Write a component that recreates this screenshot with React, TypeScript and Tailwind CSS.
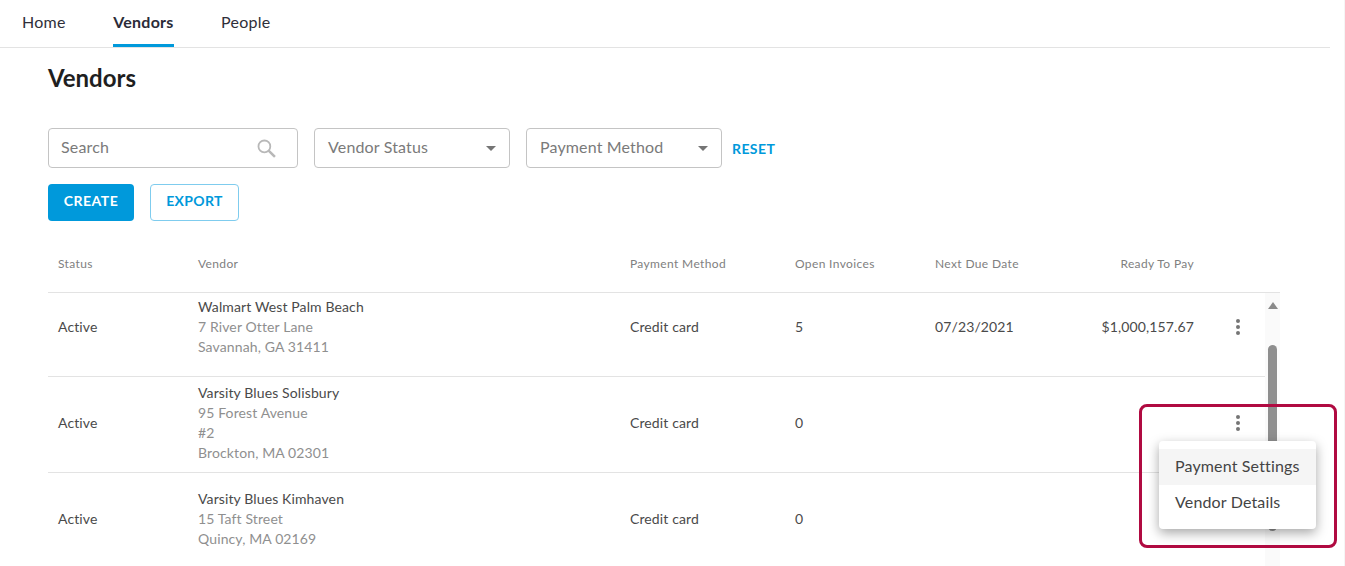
function Kebab() {
  return (
    <svg width="6" height="18" viewBox="0 0 6 18" className="block">
      <circle cx="3" cy="3" r="2" fill="#757575" />
      <circle cx="3" cy="9" r="2" fill="#757575" />
      <circle cx="3" cy="15" r="2" fill="#757575" />
    </svg>
  );
}

function Caret() {
  return (
    <svg width="10" height="5" viewBox="0 0 10 5" className="block">
      <path d="M0 0h10L5 5z" fill="#757575" />
    </svg>
  );
}

function Select({ label, w }: { label: string; w: string }) {
  return (
    <div className={`${w} h-10 border border-[#c4c4c4] rounded flex items-center justify-between pl-[13px] pr-[13px] text-[#7a7a7a] text-base`}>
      <span className="tracking-[0.15px] pb-[2px]">{label}</span>
      <Caret />
    </div>
  );
}

const rows = [
  { name: "Walmart West Palm Beach", addr: ["7 River Otter Lane", "Savannah, GA 31411"], open: "5", due: "07/23/2021", pay: "$1,000,157.67", h: "h-[84px] pb-[15px]" },
  { name: "Varsity Blues Solisbury", addr: ["95 Forest Avenue", "#2", "Brockton, MA 02301"], open: "0", due: "", pay: "", h: "h-[96px] pb-[3px]" },
  { name: "Varsity Blues Kimhaven", addr: ["15 Taft Street", "Quincy, MA 02169"], open: "0", due: "", pay: "", h: "h-[96px] pb-[3px]" },
];

const cols = "grid grid-cols-[150px_432px_165px_140px_120px_139px_1fr]";

export default function App() {
  return (
    <div className="[font-family:Lato,sans-serif] relative h-[566px] w-[1345px] overflow-hidden bg-white text-[#333]">
      <nav className="w-[1330px] h-12 border-b border-[#e3e3e3] flex pl-[22px] gap-[47.5px] text-base tracking-[0.25px] leading-6">
        <span className="h-full pt-[10px] text-[#2f2f3a]">Home</span>
        <span className="h-[47px] pt-[10px] font-bold text-[#2b2b38] border-b-[3px] border-[#0099db]">Vendors</span>
        <span className="h-full pt-[10px] text-[#2f2f3a]">People</span>
      </nav>

      <main className="w-[1280px] pl-12">
        <h1 className="text-2xl font-bold text-[#1f1f1f] leading-[30px] mt-[15px]">Vendors</h1>

        <div className="flex items-center mt-[35px]">
          <div className="w-[250px] h-10 border border-[#c4c4c4] rounded flex items-center justify-between pl-[12px] pr-[21px] text-[#7a7a7a] text-base">
            <span className="tracking-[0.15px] pb-[2px]">Search</span>
            <svg width="19" height="19" viewBox="0 0 18 18" fill="none" stroke="#b8b8b8" className="block">
              <circle cx="7" cy="7" r="5.6" strokeWidth="1.7" />
              <path d="M11 11l6 6" strokeWidth="2.4" />
            </svg>
          </div>
          <div className="ml-4"><Select label="Vendor Status" w="w-[196px]" /></div>
          <div className="ml-4"><Select label="Payment Method" w="w-[196px]" /></div>
          <span className="ml-[10px] mt-[2px] text-sm font-bold text-[#0099db] tracking-[0.4px]">RESET</span>
        </div>

        <div className="flex mt-4 gap-4">
          <div className="w-[86px] h-[37px] pb-[3px] rounded bg-[#0099db] text-white text-sm font-bold flex items-center justify-center tracking-[0.5px]">CREATE</div>
          <div className="w-[89px] h-[37px] pb-[4px] rounded border border-[#7fccee] text-[#0099db] text-sm font-bold flex items-center justify-center tracking-[0.35px]">EXPORT</div>
        </div>

        <div className={`${cols} mt-[22px] h-[50px] border-b border-[#e3e3e3] text-xs text-[#808080] tracking-[0.36px] pt-[13px] leading-[16px]`}>
          <span className="pl-[10px]">Status</span>
          <span>Vendor</span>
          <span>Payment Method</span>
          <span>Open Invoices</span>
          <span>Next Due Date</span>
          <span className="text-right">Ready To Pay</span>
        </div>

        <div className="flex h-[280px]">
          <div className="flex-1">
            {rows.map((r) => (
              <div key={r.name} className={`${cols} ${r.h} items-center border-b border-[#e3e3e3] text-sm leading-5 text-[#4a4a4a] tracking-[0.12px]`}>
                <span className="pl-[10px]">Active</span>
                <div>
                  <div>{r.name}</div>
                  {r.addr.map((a) => <div key={a} className="text-[#8f8f8f]">{a}</div>)}
                </div>
                <span>Credit card</span>
                <span>{r.open}</span>
                <span>{r.due}</span>
                <span className="text-right">{r.pay}</span>
                <span className="pl-[41px]"><Kebab /></span>
              </div>
            ))}
          </div>
          <div className="w-[15px] bg-[#fafafa] flex flex-col items-center">
            <svg width="10" height="7" viewBox="0 0 10 7" className="block mt-[9px]">
              <path d="M5 0l5 7H0z" fill="#8a8a8a" />
            </svg>
            <div className="w-[9px] h-[186px] mt-[36px] rounded-full bg-[#8e8e8e]" />
          </div>
        </div>
      </main>

      <div className="absolute left-[1139px] top-[404px] w-[198px] h-[144px] border-[3px] border-[#b00a41] rounded-lg" />
      <div className="absolute left-[1159px] top-[441px] w-[157px] h-[88px] py-2 bg-white rounded shadow-[0_4px_12px_rgba(0,0,0,0.35)] text-base text-[#444] tracking-[0.15px]">
        <div className="h-9 pl-4 pb-[2px] flex items-center bg-[#f5f5f5]">Payment Settings</div>
        <div className="h-9 pl-4 pb-[2px] flex items-center">Vendor Details</div>
      </div>
      <div className="absolute right-0 top-0 h-full w-px bg-[#f5f5f5]" />
    </div>
  );
}
